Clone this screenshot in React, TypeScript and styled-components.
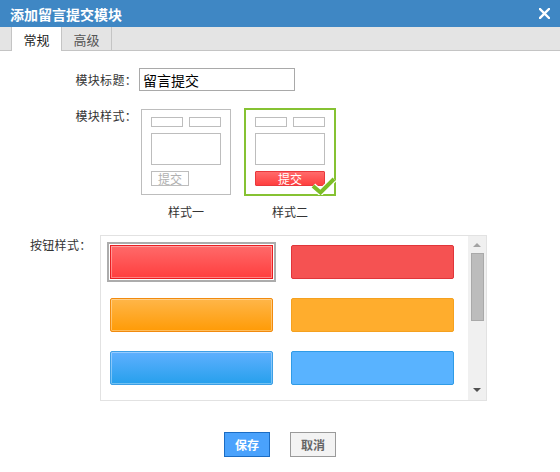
import React from "react";
import styled, { createGlobalStyle, css } from "styled-components";

const Global = createGlobalStyle`
  html, body { margin: 0; padding: 0; background: #fff; }
  body { font-family: "Noto Sans CJK SC", "Microsoft YaHei", sans-serif; font-size: 12px; color: #333; }
  * { box-sizing: border-box; }
`;

const Dialog = styled.div`
  width: 560px;
  height: 472px;
  background: #fff;
  display: flex;
  flex-direction: column;
`;

const TitleBar = styled.div`
  height: 27px;
  background: #3f87c4;
  display: flex;
  align-items: center;
  justify-content: space-between;
  padding: 0 10px 0 10px;
  color: #fff;
  font-size: 14px;
  font-weight: bold;
`;

const CloseBtn = styled.svg`
  width: 11px;
  height: 11px;
  margin-top: -1px;
`;

const TabBar = styled.div`
  height: 24px;
  background: #e4e4e4;
  border-bottom: 1px solid #c4c4c4;
  display: flex;
  padding-left: 11px;
`;

const Tab = styled.div<{ $active?: boolean }>`
  width: ${(p) => (p.$active ? 51 : 50)}px;
  height: 24px;
  display: flex;
  align-items: center;
  justify-content: center;
  font-size: 13px;
  border-right: 1px solid #c4c4c4;
  ${(p) =>
    p.$active
      ? css`
          background: #fff;
          color: #222;
          border-left: 1px solid #c4c4c4;
          margin-bottom: -1px;
          padding-top: 1px;
        `
      : css`
          color: #555;
        `}
`;

const Body = styled.div`
  display: flex;
  flex-direction: column;
`;

const FormRow = styled.div<{ $top: number; $align?: string }>`
  display: flex;
  align-items: ${(p) => p.$align || "flex-start"};
  margin-top: ${(p) => p.$top}px;
`;

const Label = styled.div<{ $width: number; $top?: number; $left?: number }>`
  width: ${(p) => p.$width}px;
  text-align: ${(p) => (p.$left !== undefined ? "left" : "right")};
  padding-left: ${(p) => p.$left || 0}px;
  line-height: 16px;
  color: #333;
  letter-spacing: 0.3px;
  margin-top: ${(p) => p.$top || 0}px;
  flex-shrink: 0;
`;

const TextInput = styled.input`
  width: 156px;
  height: 23px;
  border: 1px solid #a9a9a9;
  padding: 0 3px;
  font-family: inherit;
  font-size: 14px;
  color: #000;
  outline: none;
  margin-left: 2px;
`;

const CardsArea = styled.div`
  display: flex;
  flex-direction: column;
  margin-left: 4px;
`;

const CardsRow = styled.div`
  display: flex;
  gap: 14px;
`;

const Card = styled.div<{ $selected?: boolean }>`
  position: relative;
  width: 90px;
  height: 86px;
  border: 1px solid ${(p) => (p.$selected ? "#86c232" : "#bdbdbd")};
  ${(p) => p.$selected && css`box-shadow: 0 0 0 1px #86c232;`}
  padding: 7px 9px 0 9px;
  display: flex;
  flex-direction: column;
  gap: 6px;
`;

const MiniRow = styled.div`
  display: flex;
  gap: 6px;
`;

const MiniBox = styled.div<{ $w: number; $h: number }>`
  width: ${(p) => p.$w}px;
  height: ${(p) => p.$h}px;
  border: 1px solid #bdbdbd;
`;

const MiniButton = styled.div<{ $red?: boolean }>`
  width: ${(p) => (p.$red ? 70 : 38)}px;
  height: 15px;
  display: flex;
  align-items: center;
  justify-content: center;
  font-size: 12px;
  line-height: 13px;
  ${(p) =>
    p.$red
      ? css`
          background: linear-gradient(#ff6b6b, #ff3f3f);
          border: 1px solid #e8383c;
          color: #fff;
          border-radius: 1px;
        `
      : css`
          border: 1px solid #bdbdbd;
          color: #b0b0b0;
        `}
`;

const Check = styled.svg`
  position: absolute;
  right: -2px;
  bottom: -1px;
  width: 25px;
  height: 18px;
`;

const CaptionRow = styled.div`
  display: flex;
  gap: 14px;
  margin-top: 9px;
`;

const Caption = styled.div`
  width: 90px;
  text-align: center;
  line-height: 16px;
  color: #333;
`;

const ScrollBox = styled.div`
  width: 387px;
  height: 166px;
  border: 1px solid #e2e2e2;
  display: flex;
`;

const ScrollContent = styled.div`
  flex: 1;
  overflow: hidden;
  padding: 9px 0 0 9px;
  display: grid;
  grid-template-columns: 163px 163px;
  column-gap: 18px;
  row-gap: 19px;
  align-content: start;
`;

type Variant = { bg: string; border: string; flat?: boolean; selected?: boolean };

const StyleBtn = styled.div<{ $bg: string; $border: string; $flat?: boolean; $selected?: boolean }>`
  height: 34px;
  background: ${(p) => p.$bg};
  border: 1px solid ${(p) => p.$border};
  border-radius: 2px;
  ${(p) => !p.$flat && css`box-shadow: inset 0 0 0 1px rgba(255, 255, 255, 0.35);`}
  ${(p) =>
    p.$selected &&
    css`
      outline: 2px solid #acacac;
      outline-offset: 1px;
      border-radius: 0;
    `}
`;

const ScrollTrack = styled.div`
  width: 18px;
  background: #f0f0f0;
  display: flex;
  flex-direction: column;
  align-items: center;
`;

const Arrow = styled.div<{ $down?: boolean }>`
  width: 0;
  height: 0;
  border-left: 4px solid transparent;
  border-right: 4px solid transparent;
  ${(p) =>
    p.$down
      ? css`
          border-top: 4px solid #505050;
          margin-top: auto;
          margin-bottom: 8px;
        `
      : css`
          border-bottom: 4px solid #a3a3a3;
          margin-top: 7px;
        `}
`;

const Thumb = styled.div`
  width: 13px;
  height: 68px;
  margin-top: 6px;
  background: #bcbcbc;
  border: 1px solid #a9a9a9;
`;

const Footer = styled.div`
  display: flex;
  justify-content: center;
  gap: 20px;
  margin-top: 31px;
`;

const FootBtn = styled.button<{ $primary?: boolean }>`
  width: 46px;
  height: 25px;
  font-family: inherit;
  font-size: 12px;
  font-weight: bold;
  padding: 0;
  cursor: pointer;
  ${(p) =>
    p.$primary
      ? css`
          background: #4aa2fc;
          border: 1px solid #1b6cc3;
          color: #fff;
        `
      : css`
          background: #f3f3f3;
          border: 1px solid #9a9a9a;
          color: #666;
        `}
`;

const variants: Variant[] = [
  { bg: "linear-gradient(#ff6a6a, #ff3e3e)", border: "#e81e22", selected: true },
  { bg: "#f55252", border: "#e0353a", flat: true },
  { bg: "linear-gradient(#ffb649, #ff9b06)", border: "#f18a0e" },
  { bg: "#ffad2d", border: "#f5a11f", flat: true },
  { bg: "linear-gradient(#5fb0ff, #26a0ec)", border: "#3d9fe6" },
  { bg: "#59b3ff", border: "#2f9be6", flat: true },
];

export default function App() {
  return (
    <Dialog>
      <Global />
      <TitleBar>
        <span>添加留言提交模块</span>
        <CloseBtn viewBox="0 0 11 11">
          <path d="M1 1 L10 10 M10 1 L1 10" stroke="#fff" strokeWidth="2.4" strokeLinecap="square" />
        </CloseBtn>
      </TitleBar>
      <TabBar>
        <Tab $active>常规</Tab>
        <Tab>高级</Tab>
      </TabBar>
      <Body>
        <FormRow $top={17} $align="center">
          <Label $width={137}>模块标题：</Label>
          <TextInput defaultValue="留言提交" />
        </FormRow>
        <FormRow $top={18}>
          <Label $width={137} $top={-1}>模块样式：</Label>
          <CardsArea>
            <CardsRow>
              <Card>
                <MiniRow>
                  <MiniBox $w={32} $h={10} />
                  <MiniBox $w={32} $h={10} />
                </MiniRow>
                <MiniBox $w={70} $h={32} />
                <MiniButton>提交</MiniButton>
              </Card>
              <Card $selected>
                <MiniRow>
                  <MiniBox $w={32} $h={10} />
                  <MiniBox $w={32} $h={10} />
                </MiniRow>
                <MiniBox $w={70} $h={32} />
                <MiniButton $red>提交</MiniButton>
                <Check viewBox="0 0 25 18">
                  <path d="M2 9 L9.5 15.5 L23 2" fill="none" stroke="#fff" strokeWidth="6.5" />
                  <path d="M2 9 L9.5 15.5 L23 2" fill="none" stroke="#7cbd27" strokeWidth="4" />
                </Check>
              </Card>
            </CardsRow>
            <CaptionRow>
              <Caption>样式一</Caption>
              <Caption>样式二</Caption>
            </CaptionRow>
          </CardsArea>
        </FormRow>
        <FormRow $top={15}>
          <Label $width={100} $top={2} $left={30}>
            按钮样式：
          </Label>
          <ScrollBox>
            <ScrollContent>
              {variants.map((v, i) => (
                <StyleBtn key={i} $bg={v.bg} $border={v.border} $flat={v.flat} $selected={v.selected} />
              ))}
            </ScrollContent>
            <ScrollTrack>
              <Arrow />
              <Thumb />
              <Arrow $down />
            </ScrollTrack>
          </ScrollBox>
        </FormRow>
        <Footer>
          <FootBtn $primary>保存</FootBtn>
          <FootBtn>取消</FootBtn>
        </Footer>
      </Body>
    </Dialog>
  );
}
